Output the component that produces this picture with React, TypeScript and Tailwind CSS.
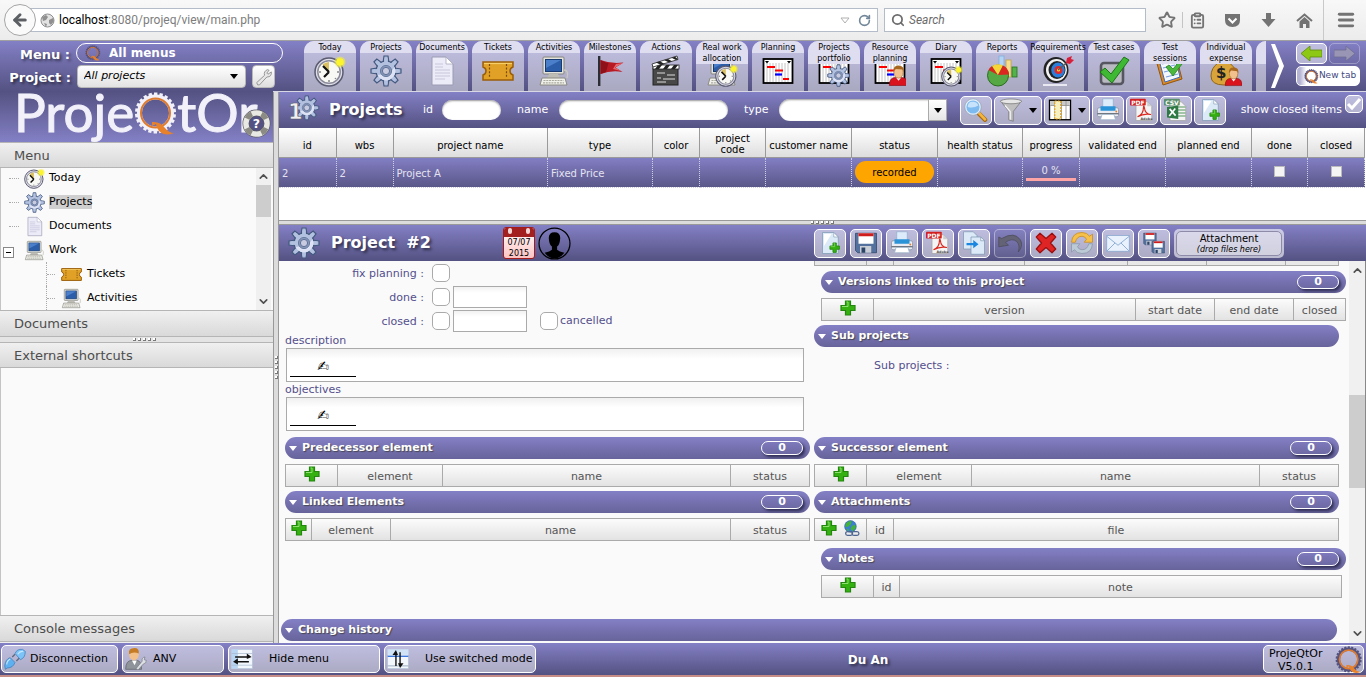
import type { ReactNode } from 'react'
import { clsx } from 'clsx'
import { ArrowLeft, ChevronDown, ChevronUp, ClipboardList, Menu, RotateCw, Search, Star } from 'lucide-react'

const BAR = 'bg-linear-to-b from-[#8480c6] to-[#545282]'
const PANEL_TITLE =
    'flex shrink-0 items-center border-y border-[#b5b5b5] bg-linear-to-b from-[#f0f0f0] to-[#d9d9d9] pt-px pl-3.5 text-[13px] text-[#4d4d4d]'
const TEXT_SHADOW = '[text-shadow:2px_2px_3px_rgba(0,0,0,0.55)]'

// *Icons
const Icon = ({ size = 32, className, children }: { size?: number; className?: string; children: ReactNode }) => (
    <svg width={size} height={size} viewBox="0 0 32 32" className={clsx('shrink-0', className)} aria-hidden="true">
        {children}
    </svg>
)

const At = ({ x, y, s, children }: { x: number; y: number; s: number; children: ReactNode }) => (
    <g transform={`translate(${x} ${y}) scale(${s})`}>{children}</g>
)

const Clock = () => (
    <g>
        <circle cx="15" cy="17" r="14" fill="#dedeea" stroke="#5a5a70" strokeWidth="1.5" />
        <circle cx="15" cy="17" r="11.2" fill="#f8f8f4" stroke="#8a8a9a" strokeWidth="1.5" />
        <path d="M15 17 8.5 9.5A10 10 0 0 1 15 7Z" fill="#d9bf5f" />
        <path d="M15 17 9 11M15 17l-5 5" stroke="#111" strokeWidth="2.2" fill="none" />
        <g fill="#888">
            <circle cx="15" cy="26" r="1" />
            <circle cx="24" cy="17" r="1" />
            <circle cx="6" cy="17" r="1" />
            <circle cx="21.5" cy="23.5" r="0.8" />
        </g>
        <circle cx="26" cy="7" r="5.5" fill="#f4ee3a" opacity="0.55" />
        <circle cx="26" cy="7" r="3.8" fill="#fdf52c" />
    </g>
)

const TEETH = [0, 45, 90, 135, 180, 225, 270, 315]

const Gear = () => (
    <g>
        {TEETH.map((a) => (
            <path key={a} d="M13 8 14 1h4l1 7Z" fill="#a9b7d9" stroke="#44597f" strokeWidth="1.2" transform={`rotate(${a} 16 16)`} />
        ))}
        <circle cx="16" cy="16" r="10" fill="#b4c1de" stroke="#44597f" strokeWidth="1.2" />
        {TEETH.map((a) => (
            <path key={a} d="M13.7 9.5 14.6 2.5h2.8l.9 7Z" fill="#b3c1e0" transform={`rotate(${a} 16 16)`} />
        ))}
        <path d="M7.5 20a9.3 9.3 0 0 0 17-8q-3 7-17 8Z" fill="#dde2f4" />
        <circle cx="16" cy="16" r="5.6" fill="#8797b9" stroke="#687ba1" strokeWidth="1" />
        <circle cx="16" cy="16" r="3.6" fill="#c9cbe0" stroke="#5d7097" strokeWidth="1" />
    </g>
)

const Doc = () => (
    <g>
        <path d="M6 2h14l7 7v21H6Z" fill="#ececf8" stroke="#9c9cb4" strokeWidth="1" />
        <path d="M20 2v7h7Z" fill="#fff" stroke="#a8a8bd" strokeWidth="0.8" />
        <path d="M9 9h8M9 12h8M9 15h15M9 18h15M9 21h15M9 24h10" stroke="#c6c6dc" strokeWidth="1.2" />
    </g>
)

const Ticket = () => (
    <g>
        <path
            d="M1 7h30v5q-3 1-3 4t3 4v5H1v-5q3-1 3-4t-3-4Z"
            fill="#e0a126"
            stroke="#9a5d08"
            strokeWidth="1.5"
        />
        <path d="M2 8.5h28" stroke="#f6cf6a" strokeWidth="1.2" />
        <path d="M7.5 9v14M24.5 9v14" stroke="#7d4a05" strokeWidth="1.2" strokeDasharray="2 1.6" />
    </g>
)

const Computer = () => (
    <g>
        <rect x="5" y="2" width="21" height="17" rx="1" fill="#e4e4dd" stroke="#84847e" />
        <rect x="7.5" y="4.5" width="16" height="12" fill="#2c5da8" stroke="#173a73" />
        <path d="M8 5h15l-15 8Z" fill="#4b7fca" />
        <path d="M11 19h9l2 4H9Z" fill="#bdbdb5" />
        <path d="M4 23h23l2 7H2Z" fill="#f0f0ea" stroke="#8a8a82" />
        <path d="M5.5 25.5h20M5 27.8h21" stroke="#a9a9a0" strokeWidth="1.2" strokeDasharray="2 0.8" />
        <path d="M26 15q5 0 3 8" fill="none" stroke="#c9c9c0" strokeWidth="1.3" />
    </g>
)

const Flag = () => (
    <g>
        <rect x="4" y="1" width="2.4" height="30" fill="#2c2c34" />
        <path d="M6.5 5q10 4 23 2.5l-8 5 7 4.5q-11-2-22 2Z" fill="#b81a24" />
        <path d="M6.5 5q5 3 8 3L12 17l-5.5 2Z" fill="#8e1019" />
        <path d="M22 9l7-1-8 4.5 6 3.5-8-2Z" fill="#e8666c" />
    </g>
)

const Clap = () => (
    <g>
        <rect x="3" y="13" width="25" height="17" fill="#484848" stroke="#222" />
        <rect x="3" y="10" width="26" height="4" fill="#fff" stroke="#222" strokeWidth="0.8" />
        <path d="M5 14l3-4h4l-3 4ZM13 14l3-4h4l-3 4ZM21 14l3-4h4l-3 4Z" fill="#222" />
        <path d="M2 9 27 1l1 3.5L3 12Z" fill="#fff" stroke="#222" strokeWidth="0.8" />
        <path d="M6 7.6 11 10 14.5 9 10 6.3ZM14 5l5 2.4L22 6.3 18 3.9ZM21.5 2.8 26 5l2-.7L25 1.7Z" fill="#222" />
        <path d="M7 18h8M17 20h8M7 23h4M13 24h12M7 27h9" stroke="#dcdcdc" strokeWidth="1.2" />
    </g>
)

const Plan = () => (
    <g>
        <rect x="1.5" y="4" width="29" height="24" fill="#fff" stroke="#000" strokeWidth="1.8" />
        <path d="M5 8v19M8 8v19M11 8v19M14 8v19M17 8v19M20 8v19M23 8v19M26 8v19" stroke="#c4c4c4" strokeWidth="1" />
        <path d="M3 6h4l-2 2.5ZM25 6h4l-2 2.5Z" fill="#000" />
        <path d="M5 12h8M13 15.5h8M21 24h6" stroke="#f00" strokeWidth="2.2" />
        <path d="M13 19.5h7" stroke="#00f" strokeWidth="2.2" />
    </g>
)

const Person = () => (
    <g>
        <path d="M2 31q0-12 9-12h10q9 0 9 12Z" fill="#d9141f" stroke="#8c0a12" />
        <path d="M12 19l4 5 4-5Z" fill="#fff" />
        <ellipse cx="16" cy="11" rx="7" ry="9" fill="#f1c08c" stroke="#a87038" />
        <path d="M8 10Q8 0 17 1q8 0 7 10l-2-4-10-1Z" fill="#a8671f" />
    </g>
)

const Reports = () => (
    <g>
        <rect x="13" y="1" width="5" height="16" fill="#b4d4f4" stroke="#7faedb" strokeWidth="0.8" />
        <rect x="20" y="5" width="5" height="17" fill="#f5de8c" stroke="#bfa548" strokeWidth="0.8" />
        <rect x="26" y="12" width="5" height="10" fill="#55b24a" stroke="#27701e" strokeWidth="0.8" />
        <circle cx="12" cy="20.5" r="10.5" fill="#55a843" stroke="#286d1c" />
        <path d="M12 20 2.5 15A11 11 0 0 1 6 11Z" fill="#d8281f" />
        <path d="M12 20 6 11A11 11 0 0 1 17 10.5Z" fill="#f6d53a" />
        <path d="M12 20 17 10.5A11 11 0 0 1 23 19.5Z" fill="#d8281f" />
    </g>
)

const Target = () => (
    <g>
        <path d="M1 30h24" stroke="#e8e8f2" strokeWidth="2" />
        <ellipse cx="14" cy="15" rx="12.5" ry="13" fill="#222" />
        <ellipse cx="14.5" cy="15" rx="10.5" ry="11" fill="#f4f4f4" />
        <ellipse cx="15" cy="15" rx="8.5" ry="9" fill="#222" />
        <ellipse cx="16" cy="15" rx="6.8" ry="7.4" fill="#2b7fdb" />
        <circle cx="16.5" cy="15" r="4" fill="#e3282c" />
        <circle cx="16.5" cy="15" r="1.6" fill="#f8d838" />
        <path d="M16 15 27 6" stroke="#5a5a5a" strokeWidth="1.4" />
        <path d="M24 8l1-5 5-2-1 3 3 1-4 4Z" fill="#d81e38" />
    </g>
)

const TestCase = () => (
    <g>
        <rect x="3" y="8" width="22" height="21" rx="3" fill="#b9b9c2" stroke="#565660" strokeWidth="2.6" />
        <path d="M2 17l5-4 6 6L26 2l5 3-17 23Z" fill="#3fb834" stroke="#1b7514" strokeWidth="1" />
    </g>
)

const Session = () => (
    <g>
        <path d="M2 5 22 1l6 23-19 6Z" fill="#d98a2a" stroke="#93560f" />
        <path d="M5 5 21 2l5 20-15 5Z" fill="#f6f8ff" stroke="#3c6bc0" />
        <path d="M8 9l12-3M9 13l12-3M10 17l12-3M12 22l12-3" stroke="#7ba0e0" strokeWidth="1.2" />
        <path d="M12 12l3-2 4 4 9-11 3 2-12 16Z" fill="#49b83c" stroke="#1b7514" strokeWidth="0.7" />
    </g>
)

const Money = () => (
    <g>
        <path d="M9 2q4 3 8-1l1 6q9 6 9 14 0 9-13 9T1 21Q1 13 8 8Z" fill="#d9a43a" stroke="#8f651a" />
        <path d="M8 8h10" stroke="#7a5110" strokeWidth="1.6" />
        <text x="6" y="23" fontSize="15" fontWeight="bold" fill="#222">
            $
        </text>
    </g>
)

const Printer = () => (
    <g>
        <path d="M9 1h14v13H9Z" fill="#dcecfb" stroke="#86a8c8" strokeWidth="0.8" />
        <rect x="2" y="13" width="28" height="12" rx="2" fill="#e9ecf2" stroke="#8792a4" />
        <rect x="6" y="11" width="20" height="6" fill="#2b93d8" />
        <path d="M2 21h28" stroke="#4d5560" strokeWidth="1.4" />
        <path d="M8 22h16l2 7H6Z" fill="#fff" stroke="#9ab1c8" />
        <circle cx="27" cy="18" r="1.2" fill="#f07a1c" />
    </g>
)

const Pdf = () => (
    <g>
        <path d="M8 5h15l6 6v19H8Z" fill="#f4f4f4" stroke="#a4a4a4" />
        <path d="M23 5v6h6Z" fill="#ccc" />
        <rect x="0" y="1" width="21" height="9" rx="1" fill="#d31f1f" />
        <text x="1.5" y="8.8" fontSize="8" fontWeight="bold" fill="#fff">
            PDF
        </text>
        <path d="M10 25q8-3 8-13 0-3 1 0 1 10 9 10-9-2-18 3Z" fill="none" stroke="#d8281f" strokeWidth="1.5" />
        <text x="14" y="29.3" fontSize="4.5" fontWeight="bold" fill="#444">
            Adobe
        </text>
    </g>
)

const Csv = () => (
    <g>
        <path d="M8 5h15l6 6v19H8Z" fill="#f4f4f4" stroke="#a4a4a4" />
        <rect x="0" y="1" width="21" height="9" rx="1" fill="#5b8f6b" />
        <text x="1.5" y="8.8" fontSize="8" fontWeight="bold" fill="#fff">
            CSV
        </text>
        <path d="M18 12h11M18 16h11M18 20h11M18 24h11" stroke="#8bb58f" strokeWidth="2" />
        <path d="M4 12 19 10v18L4 26Z" fill="#2e7a44" />
        <path d="M7.5 14.5l8 9M15 14l-8 10" stroke="#fff" strokeWidth="2.2" />
    </g>
)

const Plus = () => (
    <g>
        <path d="M11 2h10v9h9v10h-9v9H11v-9H2V11h9Z" fill="#35b011" stroke="#23860e" strokeWidth="2.4" />
        <path d="M13 4h3v9H4" fill="none" stroke="#8ee070" strokeWidth="2" />
    </g>
)

const AddDoc = () => (
    <g>
        <path d="M6 2h15l6 6v22H6Z" fill="#dceaf8" stroke="#7f99b4" />
        <path d="M21 2v6h6Z" fill="#fff" stroke="#7f99b4" strokeWidth="0.8" />
        <path d="M8 4h10l-10 16Z" fill="#fff" />
        <At x={15} y={15} s={0.45}>
            <Plus />
        </At>
    </g>
)

const Floppy = () => (
    <g>
        <path d="M2 3h28v26H5l-3-3Z" fill="#53719c" stroke="#2c4468" />
        <rect x="6" y="3" width="20" height="14" fill="#fff" />
        <rect x="6" y="3" width="20" height="4" fill="#cf1c1c" />
        <rect x="8" y="20" width="15" height="9" fill="#c9ced6" />
        <rect x="10" y="22" width="5" height="7" fill="#2c4468" />
    </g>
)

const CopyDoc = () => (
    <g>
        <path d="M2 1h13l5 5v18H2Z" fill="#dceaf8" stroke="#7f99b4" />
        <path d="M12 8h13l5 5v18H12Z" fill="#dceaf8" stroke="#7f99b4" />
        <path d="M25 8v5h5Z" fill="#fff" stroke="#7f99b4" />
        <path d="M6 16h9v-4l7 5.5-7 5.5v-4H6Z" fill="#1a86e0" />
    </g>
)

const Undo = () => (
    <path d="M1 8v13l13-2-4-4q9-6 15-1 5 5 2 14 7-8 3-16-8-12-25-2Z" fill="#646376" stroke="#4c4b5c" />
)

const Cross = () => (
    <path
        d="M3 8 8 3l8 7 8-7 5 5-7 8 7 8-5 5-8-7-8 7-5-5 7-8Z"
        fill="#de2424"
        stroke="#9c0d0d"
        strokeWidth="1.6"
        strokeLinejoin="round"
    />
)

// two half-circle arrows, the upper one gold and the lower one grey
const Refresh = () => (
    <g strokeLinejoin="round">
        <path d="M2 15Q3 2 16 2q7 0 10 5l4-3v11H19l3-4q-2-4-6-4-7 0-9 8Z" fill="#f5c14a" stroke="#c88a17" />
        <path d="M30 17Q29 30 16 30q-7 0-10-5l-4 3V17h11l-3 4q2 4 6 4 7 0 9-8Z" fill="#bccad6" stroke="#8796a4" />
    </g>
)

const Mail = () => (
    <g>
        <rect x="1" y="6" width="30" height="21" fill="#e8f1fc" stroke="#86a5ce" />
        <path d="M1 7 16 19 31 7M1 27l11-11M31 27 20 16" fill="none" stroke="#8eaed6" strokeWidth="1.3" />
    </g>
)

const Magnifier = () => (
    <g>
        <path d="M19 20l9 9" stroke="#a86a10" strokeWidth="6" strokeLinecap="round" />
        <path d="M20 20l8 8.5" stroke="#f4b53c" strokeWidth="3.6" strokeLinecap="round" />
        <circle cx="12" cy="12" r="10" fill="#7cbaf0" stroke="#e4eef8" strokeWidth="2.4" />
        <circle cx="12" cy="12" r="11" fill="none" stroke="#7b8ba4" strokeWidth="0.8" />
        <path d="M5 12Q5 4 13 5q5 1 6 5-6 4-14 2Z" fill="#c6e3fb" />
    </g>
)

const Funnel = () => (
    <g>
        <path d="M2 4 13 18v11l6 2V18L30 4Z" fill="#bfbfbf" stroke="#777" />
        <ellipse cx="16" cy="4.5" rx="14" ry="3.2" fill="#e6e6e6" stroke="#777" />
        <path d="M8 10l7 8v11" fill="none" stroke="#f4f4f4" strokeWidth="1.6" />
    </g>
)

const Columns = () => (
    <g>
        <rect x="2" y="3" width="28" height="26" fill="#fff" stroke="#000" strokeWidth="1.8" />
        <rect x="3" y="4" width="26" height="6" fill="#c9c9c9" />
        <path d="M9 4v24M18 4v24M24 4v24M3 10h26" stroke="#888" />
        <rect x="9" y="4" width="8" height="24" fill="#f6efc0" stroke="#e2a21a" strokeWidth="1.6" strokeDasharray="2.5 1.5" />
    </g>
)

const Wrench = () => (
    <path
        d="M3 26 17 13q-2-7 5-10l3 1-4 5 2 2 6-4q1 9-8 9L8 30q-4 2-5-4Z"
        fill="#e6e6e6"
        stroke="#8d8d8d"
        strokeWidth="1.6"
    />
)

const GlobeLink = () => (
    <g>
        <circle cx="14" cy="12" r="11" fill="#3b7fd0" stroke="#27558f" />
        <path d="M6 6q6-5 10-4l-1 6-6 5-5-1ZM17 11l6-2 1 6-6 6-4-5ZM6 16l5 2-1 4Z" fill="#43b238" />
        <rect x="5" y="22" width="13" height="7" rx="3.5" fill="none" stroke="#4d6692" strokeWidth="2.4" />
        <rect x="17" y="22" width="13" height="7" rx="3.5" fill="none" stroke="#4d6692" strokeWidth="2.4" />
    </g>
)

const Plug = () => (
    <g>
        <path d="M1 26q1-10 8-12l7 7q-3 8-11 8l-3 2Z" fill="#5fb0ee" stroke="#3a78b4" />
        <path d="M16 8q3-7 11-6l4 3q0 9-7 12Z" fill="#7cc4f7" stroke="#3a78b4" />
        <path d="M12 13l4-4M18 19l4-4" stroke="#5a6a80" strokeWidth="2" />
        <path d="M9 16q-5 3-5 8M20 9q3-5 8-4" stroke="#c8e8fd" strokeWidth="1.6" fill="none" />
    </g>
)

const UserTool = () => (
    <g>
        <path d="M1 31q0-13 9-13h7q7 0 7 13Z" fill="#8f939a" stroke="#5b5e64" />
        <path d="M10 18l4 7 3-7Z" fill="#fff" />
        <ellipse cx="13" cy="9" rx="7" ry="9" fill="#f4c08a" />
        <path d="M6 9Q4 0 14 0q7 0 6 8-8-3-14 1Z" fill="#c67c25" />
        <path d="M16 30 25 19q-1-5 4-6l-1 4 3 1q0 5-4 5l-8 9Z" fill="#dcdfe4" stroke="#767b84" />
    </g>
)

const SwitchMode = () => (
    <g>
        <rect x="1" y="2" width="30" height="28" fill="#f2f7fd" stroke="#b4c4d8" />
        <rect x="1" y="2" width="30" height="8" fill="#cfe2f6" />
        <path d="M1 12h30" stroke="#2166d8" strokeWidth="1.8" />
        <path d="M1 26h30" stroke="#7a8fa8" />
        <path d="M13 6v20M19 6v20" stroke="#111" strokeWidth="2" />
        <path d="M13 3l-5 7h8ZM19 29l5-7h-8Z" fill="#111" />
    </g>
)

const HideMode = () => (
    <g>
        <rect x="1" y="2" width="30" height="28" fill="#f2f7fd" stroke="#b4c4d8" />
        <rect x="1" y="2" width="9" height="28" fill="#b9d5f4" />
        <path d="M1 8h30M1 25h30" stroke="#a4b6cc" />
        <path d="M6 13h20M6 20h20" stroke="#111" strokeWidth="2" />
        <path d="M30 13l-7-5v8ZM3 20l7-5v9Z" fill="#111" />
    </g>
)

const Q_TEETH = Array.from({ length: 22 }, (_, i) => (i * 360) / 22)

const QLogo = ({ size, light }: { size: number; light?: boolean }) => (
    <svg width={size} height={size} viewBox="0 0 44 44" className="shrink-0" aria-hidden="true">
        {Q_TEETH.map((a) => (
            <rect key={a} x="20" y="0.5" width="3.4" height="5" fill={light ? '#f2f1fa' : '#55537f'} transform={`rotate(${a} 21.5 21)`} />
        ))}
        <circle cx="21.5" cy="21" r="16" fill="none" stroke={light ? '#f2f1fa' : '#55537f'} strokeWidth="5" />
        <circle cx="21.5" cy="21" r="14.5" fill="none" stroke="#e07b2e" strokeWidth={light ? 2 : 2.6} />
        <path d="M18 30q8-1 13 6 4 5 9 5-9 4-15-2-3-4-3-7l-4 2Z" fill="#e8812c" />
    </svg>
)

const Caret = ({ className }: { className?: string }) => (
    <svg width="8" height="5" viewBox="0 0 8 5" className={className} aria-hidden="true">
        <path d="M0 0h8L4 5Z" fill="currentColor" />
    </svg>
)

// *Data
const shortcuts: { label: string; icon: ReactNode }[] = [
    { label: 'Today', icon: <Clock /> },
    { label: 'Projects', icon: <Gear /> },
    { label: 'Documents', icon: <Doc /> },
    { label: 'Tickets', icon: <Ticket /> },
    { label: 'Activities', icon: <Computer /> },
    { label: 'Milestones', icon: <Flag /> },
    { label: 'Actions', icon: <Clap /> },
    { label: 'Real work allocation', icon: <><Computer /><At x={9} y={9} s={0.72}><Clock /></At></> },
    { label: 'Planning', icon: <Plan /> },
    { label: 'Projects portfolio', icon: <><Plan /><At x={9} y={9} s={0.72}><Gear /></At></> },
    { label: 'Resource planning', icon: <><Plan /><At x={14} y={10} s={0.66}><Person /></At></> },
    { label: 'Diary', icon: <><Plan /><At x={11} y={10} s={0.68}><Clock /></At></> },
    { label: 'Reports', icon: <Reports /> },
    { label: 'Requirements', icon: <Target /> },
    { label: 'Test cases', icon: <TestCase /> },
    { label: 'Test sessions', icon: <Session /> },
    { label: 'Individual expense', icon: <><Money /><At x={14} y={12} s={0.6}><Person /></At></> },
]

const tree = [
    { label: 'Today', icon: <Clock />, depth: 0 },
    { label: 'Projects', icon: <Gear />, depth: 0, selected: true },
    { label: 'Documents', icon: <Doc />, depth: 0 },
    { label: 'Work', icon: <Computer />, depth: 0, open: true },
    { label: 'Tickets', icon: <Ticket />, depth: 1 },
    { label: 'Activities', icon: <Computer />, depth: 1 },
]

const gridColumns = [
    { label: 'id', width: 'w-[57px]', value: '2' },
    { label: 'wbs', width: 'w-[57px]', value: '2' },
    { label: 'project name', width: 'w-auto', value: 'Project A' },
    { label: 'type', width: 'w-[105px]', value: 'Fixed Price' },
    { label: 'color', width: 'w-[47px]' },
    { label: 'project code', width: 'w-[66px]', wrap: true },
    { label: 'customer name', width: 'w-[86px]' },
    { label: 'status', width: 'w-[86px]' },
    { label: 'health status', width: 'w-[85px]' },
    { label: 'progress', width: 'w-[57px]' },
    { label: 'validated end', width: 'w-[86px]' },
    { label: 'planned end', width: 'w-[86px]' },
    { label: 'done', width: 'w-[56px]' },
    { label: 'closed', width: 'w-[57px]' },
]

// *Parts
const ToolButton = ({ label, width = 'w-8', disabled, caret, children }: {
    label: string
    width?: string
    disabled?: boolean
    caret?: boolean
    children: ReactNode
}) => (
    <button
        type="button"
        aria-label={label}
        disabled={disabled}
        className={clsx(
            'flex h-[29px] shrink-0 items-center justify-center gap-1.5 rounded-[5px] border',
            disabled ? 'border-white/40 bg-white/5' : 'border-white bg-white/50',
            width,
        )}
    >
        <Icon size={24}>{children}</Icon>
        {caret && <Caret className="text-black" />}
    </button>
)

const Section = ({ title, count }: { title: string; count?: number }) => (
    <h2 className="flex h-[22px] items-center rounded-full bg-linear-to-b from-[#8480c6] to-[#67639a] pr-[7px] pl-1 text-[11px] font-bold text-white">
        <Caret className="mr-[5px] text-white" />
        <span className="[text-shadow:1px_1px_1px_rgba(60,60,60,0.8)]">{title}</span>
        {count !== undefined && (
            <span className="ml-auto flex h-[14px] w-[42px] items-center justify-center rounded-full border border-white pt-px shadow-[2px_2px_3px_rgba(20,20,50,0.7)]">
                {count}
            </span>
        )}
    </h2>
)

const LinkTable = ({ columns, className, link }: {
    columns: { label: string; width?: string }[]
    className?: string
    link?: boolean
}) => (
    <table className={clsx('h-[23px] w-full table-fixed border-collapse bg-linear-to-b from-[#fcfcfc] to-[#e2e2e2] text-[11px] text-[#555]', className)}>
        <thead>
            <tr>
                {columns.map((c, i) => (
                    <th key={i} className={clsx('h-[22px] border border-[#aaa] p-0 pt-0.5 leading-4 font-normal', c.width)}>
                        {c.label || (
                            <span className="flex items-center justify-center gap-1.5">
                                <button type="button" aria-label="Add" className="-mt-1.5">
                                    <Icon size={16}><Plus /></Icon>
                                </button>
                                {link && (
                                    <button type="button" aria-label="Add link" className="-mt-1">
                                        <Icon size={17}><GlobeLink /></Icon>
                                    </button>
                                )}
                            </span>
                        )}
                    </th>
                ))}
            </tr>
        </thead>
    </table>
)

const Tick = ({ id }: { id: string }) => (
    <input id={id} type="checkbox" className="size-[18px] shrink-0 appearance-none rounded-[5px] border border-[#aaa] bg-white" />
)

const FieldRow = ({ id, label, date, children }: { id: string; label: string; date?: boolean; children?: ReactNode }) => (
    <div className="flex h-6 items-center text-[11px] text-[#544f8c]">
        <label htmlFor={id} className="w-[140px] pt-0.5 pr-px text-right">{label} :</label>
        <span className="w-[7px]" />
        <Tick id={id} />
        {date && (
            <input
                aria-label={`${label} date`}
                className="ml-[3px] h-[22px] w-[74px] border border-[#aaa] bg-linear-to-b from-[#f2f2f2] to-white to-30%"
            />
        )}
        {children}
    </div>
)

const RichText = ({ label }: { label: string }) => (
    <div>
        <span className="flex h-[15px] items-center pt-0.5 text-[11px] text-[#544f8c]">{label}</span>
        <div className="mr-1.5 ml-px h-[34px] border border-[#aaa] bg-linear-to-b from-[#f0f0f0] to-white to-30% px-[3px]">
            <button
                type="button"
                aria-label={`Edit ${label}`}
                className="flex h-7 w-[66px] items-end justify-center border-b border-black pb-0.5 text-[14px] leading-4 text-black"
            >
                ✍
            </button>
        </div>
    </div>
)

const Grip = ({ vertical }: { vertical?: boolean }) => (
    <span className={clsx('flex gap-[2px]', vertical && 'flex-col')}>
        {[0, 1, 2, 3, 4].map((i) => (
            <span key={i} className="size-[3px] border-r border-b border-[#777] bg-white" />
        ))}
    </span>
)

const BrowserBar = () => (
    <header className="flex h-[41px] shrink-0 items-center border-b border-[#a0a0a0] bg-linear-to-b from-[#f8f8f8] to-[#ececec] text-[12px] [font-family:Roboto,sans-serif]">
        <button
            type="button"
            aria-label="Back"
            className="relative z-10 ml-1 flex size-8 shrink-0 items-center justify-center rounded-full border border-[#a5a5a5] bg-[#fafafa] text-[#5c6064]"
        >
            <ArrowLeft size={18} strokeWidth={4} />
        </button>
        <div className="-ml-2 flex h-6 flex-1 items-center border border-[#b3bcc8] bg-white pl-[11px]">
            <svg width="15" height="15" viewBox="0 0 15 15" className="mr-1" aria-hidden="true">
                <circle cx="7.5" cy="7.5" r="6.5" fill="#e2e2e2" stroke="#8f8f8f" />
                <path d="M2 4l4-2 2 2-2 3-3 1ZM9 7l4-2 1 3-3 4-2-2ZM4 10l3 1-1 3Z" fill="#8f8f8f" />
            </svg>
            <label htmlFor="url" className="text-black">localhost</label>
            <input id="url" defaultValue=":8080/projeq/view/main.php" className="min-w-0 flex-1 text-[#7d7d7d] outline-none" />
            <svg width="10" height="7" viewBox="0 0 10 7" className="mr-2" aria-hidden="true">
                <path d="M1 1h8L5 6Z" fill="none" stroke="#b0b0b0" />
            </svg>
            <button type="button" aria-label="Reload" className="mr-1.5 text-[#72879a]">
                <RotateCw size={13} strokeWidth={3} />
            </button>
        </div>
        <div className="ml-1.5 flex h-6 w-[262px] items-center border border-[#b3bcc8] bg-white px-1.5">
            <Search size={14} className="mr-1 text-[#6c6c6c]" strokeWidth={3} />
            <input aria-label="Search" placeholder="Search" className="min-w-0 flex-1 italic outline-none placeholder:text-[#6b6b6b]" />
        </div>
        <nav className="flex h-full w-[220px] items-center text-[#737373]">
            <button type="button" aria-label="Bookmark" className="ml-3">
                <Star size={18} strokeWidth={2.5} />
            </button>
            <span className="mx-1.5 h-4 w-px bg-[#c4c4c4]" />
            <button type="button" aria-label="Bookmarks list">
                <ClipboardList size={17} strokeWidth={2.6} />
            </button>
            <button type="button" aria-label="Pocket" className="ml-[18px]">
                <svg width="17" height="15" viewBox="0 0 17 15" aria-hidden="true">
                    <path d="M1 1h15v6q0 7-7.5 7T1 7Z" fill="currentColor" />
                    <path d="M4.5 5.5l4 4 4-4" fill="none" stroke="#fff" strokeWidth="2" />
                </svg>
            </button>
            <button type="button" aria-label="Downloads" className="ml-5">
                <svg width="15" height="15" viewBox="0 0 15 15" aria-hidden="true">
                    <path d="M5 0h5v6h4.5L7.5 14 .5 6H5Z" fill="currentColor" />
                </svg>
            </button>
            <button type="button" aria-label="Home" className="ml-5">
                <svg width="17" height="15" viewBox="0 0 17 15" aria-hidden="true">
                    <path d="M1 8 8.5 1.5 16 8" fill="none" stroke="currentColor" strokeWidth="2" />
                    <path d="M3.5 8.5l5-4.5 5 4.5V15H10v-4H7v4H3.5Z" fill="currentColor" />
                </svg>
            </button>
            <span className="ml-2.5 h-full w-px bg-[#c9c9c9]" />
            <button type="button" aria-label="Menu" className="ml-3">
                <Menu size={20} strokeWidth={3.5} />
            </button>
        </nav>
    </header>
)

const Brand = () => (
    <div className="relative z-10 flex h-[101px] shrink-0 flex-col gap-0.5 bg-linear-to-b from-[#8480c6] via-[#545282] to-[#8480c6] pt-0.5 text-[13px] font-bold text-white">
        <div className="flex h-5 items-center">
            <span className={clsx('w-[76px] shrink-0 pt-1 pr-1.5 text-right', TEXT_SHADOW)}>Menu :</span>
            <button
                type="button"
                className="flex h-5 w-[207px] shrink-0 items-center gap-2 rounded-full border border-white pl-2 text-[12px]"
            >
                <QLogo size={16} />
                All menus
            </button>
        </div>
        <div className="flex h-[23px] items-center">
            <label htmlFor="project" className={clsx('w-[77px] shrink-0 pt-0.5 pr-1.5 text-right', TEXT_SHADOW)}>
                Project :
            </label>
            <span className="relative mr-1.5 text-black">
                <select
                    id="project"
                    className="block h-[23px] w-[169px] appearance-none rounded-sm border border-[#b8b8b8] bg-linear-to-b from-white to-[#e2e2e2] pl-1.5 text-[11px] font-normal italic"
                >
                    <option>All projects</option>
                </select>
                <Caret className="pointer-events-none absolute top-[9px] right-2" />
            </span>
            <button
                type="button"
                aria-label="Project settings"
                className="flex size-[23px] shrink-0 items-center justify-center rounded-sm border border-[#b8b8b8] bg-linear-to-b from-white to-[#dedede]"
            >
                <Icon size={18}><Wrench /></Icon>
            </button>
        </div>
        <div className="mt-0.5 flex pl-3.5 text-[53px] leading-[40px] font-normal text-[#f2f1fa] [-webkit-text-stroke:1px_#f2f1fa] [font-family:Lato,sans-serif]">
            Proje
            <span className="w-[43px] shrink-0">
                <QLogo size={44} light />
            </span>
            tOr
        </div>
        <button type="button" aria-label="Help" className="absolute right-0.5 bottom-1">
            <svg width="29" height="29" viewBox="0 0 30 30" aria-hidden="true">
                <circle cx="15" cy="15" r="11" fill="#545282" stroke="#5d5d66" strokeWidth="7" />
                <circle cx="15" cy="15" r="11" fill="none" stroke="#e9e9e4" strokeWidth="5.5" />
                <circle cx="15" cy="15" r="11" fill="none" stroke="#8b8b84" strokeWidth="5.5" strokeDasharray="7 10.28" strokeDashoffset="-5" />
                <text x="11" y="20" fontSize="13" fontWeight="bold" fill="#fff">?</text>
            </svg>
        </button>
    </div>
)

const SideMenu = () => (
    <aside className="flex w-[273px] shrink-0 flex-col">
        <Brand />
        <h2 className={clsx(PANEL_TITLE, 'h-[26px]')}>Menu</h2>
        <div className="flex h-[142px] shrink-0 overflow-hidden border-l border-[#c4c4c4] bg-[#fafafa]">
            <ul className="-mt-0.5 flex-1 text-[11px] text-black">
                {tree.map((n) => (
                    <li key={n.label} className={clsx('flex h-6 items-center', n.depth ? 'pl-[45px]' : 'pl-0.5')}>
                        {n.open ? (
                            <button
                                type="button"
                                aria-label="Collapse"
                                className="mt-1 mr-2.5 flex size-[11px] items-center justify-center border border-[#888] bg-white"
                            >
                                <span className="h-px w-[5px] bg-black" />
                            </button>
                        ) : (
                            <span
                                className={clsx(
                                    'flex items-center',
                                    n.depth ? 'mr-1.5 h-6 w-[9px] border-l border-dotted border-[#aaa]' : 'mr-[5px] ml-1.5 w-2.5',
                                )}
                            >
                                <span className="w-full border-t border-dotted border-[#aaa]" />
                            </span>
                        )}
                        <Icon size={21}>{n.icon}</Icon>
                        <a href="#" className={clsx('leading-[14px]', n.depth ? 'ml-[5px]' : 'ml-1', n.selected && 'bg-[#cfcfcf]')}>{n.label}</a>
                    </li>
                ))}
            </ul>
            <div className="mr-0.5 flex w-[15px] flex-col items-center gap-0.5 bg-[#f0f0f0] py-0.5 text-[#505050]">
                <ChevronUp size={13} strokeWidth={3} />
                <span className="mb-auto h-8 w-full bg-[#cdcdcd]" />
                <ChevronDown size={13} strokeWidth={3} />
            </div>
        </div>
        <h2 className={clsx(PANEL_TITLE, 'h-[27px]')}>Documents</h2>
        <div className="flex h-[5px] shrink-0 items-center justify-center bg-[#e4e4e4] pl-4">
            <Grip />
        </div>
        <h2 className={clsx(PANEL_TITLE, 'h-[26px]')}>External shortcuts</h2>
        <div className="flex-1 border-l border-[#c4c4c4] bg-[#fafafa]" />
        <h2 className={clsx(PANEL_TITLE, 'h-[27px]')}>Console messages</h2>
        <div className="h-px bg-[#eee]" />
    </aside>
)

const Toolbar = () => (
    <nav className={clsx('flex h-[51px] shrink-0 border-b border-[#d8d8e4] pl-[31px]', BAR)}>
        <div className="flex min-w-0 flex-1 gap-1 overflow-hidden">
            {shortcuts.map((s) => (
                <button
                    key={s.label}
                    type="button"
                    className="relative flex w-[52px] shrink-0 flex-col items-center rounded-t-[10px] bg-white/50"
                >
                    <span className="absolute top-3.5">
                        <Icon>{s.icon}</Icon>
                    </span>
                    <span className="relative flex w-full justify-center rounded-t-[10px] bg-[#dfdef1] pt-px text-[8px] leading-[11px] text-black">
                        {s.label}
                    </span>
                </button>
            ))}
            <span className="w-[52px] shrink-0 rounded-tl-[10px] bg-white/50">
                <span className="block h-[23px] rounded-tl-[10px] bg-[#dfdef1]" />
            </span>
        </div>
        <button type="button" aria-label="Scroll right" className="mx-1 shrink-0">
            <svg width="14" height="44" viewBox="0 0 14 44" aria-hidden="true">
                <path d="M1 0h4l9 22-9 22H1l8-22Z" fill="#fff" />
            </svg>
        </button>
        <div className="flex w-[78px] shrink-0 flex-col gap-0.5 pt-0.5 pl-2">
            <div className="flex gap-0.5">
                <button type="button" aria-label="Previous" className="flex h-[21px] w-[31px] items-center justify-center rounded-[5px] border border-white bg-white/50">
                    <svg width="21" height="15" viewBox="0 0 21 15" aria-hidden="true">
                        <path d="M0 7.5 9 0v4h12v7H9v4Z" fill="#8cc814" stroke="#5d8a0a" strokeWidth="0.8" />
                    </svg>
                </button>
                <button type="button" aria-label="Next" disabled className="flex h-[21px] w-[31px] items-center justify-center rounded-[5px] border border-white/30">
                    <svg width="21" height="15" viewBox="0 0 21 15" aria-hidden="true">
                        <path d="M21 7.5 12 0v4H0v7h12v4Z" fill="#9896b4" stroke="#6f6d92" strokeWidth="0.8" />
                    </svg>
                </button>
            </div>
            <button type="button" className="flex h-5 w-16 items-center justify-center rounded-[5px] border border-white bg-linear-to-r from-[#b5b3d4] from-5% to-white to-15% pl-1 text-[9px] whitespace-nowrap text-[#444a80]">
                <QLogo size={15} />
                New tab
            </button>
        </div>
    </nav>
)

const ProjectList = () => (
    <section className="flex h-[128px] shrink-0 flex-col bg-white">
        <div className={clsx('flex h-9 shrink-0 items-center text-[11px] text-white', BAR)}>
            <Icon size={32} className="ml-[9px]">
                <At x={6} y={1} s={0.8}><Gear /></At>
                <text x="0" y="25" fontSize="21" fontWeight="bold" fill="#f0f0f0" stroke="#55606e" strokeWidth="0.6">
                    1
                </text>
            </Icon>
            <h1 className={clsx('ml-[9px] w-[94px] text-[16px] font-bold', TEXT_SHADOW)}>Projects</h1>
            <label htmlFor="f-id" className="w-[19px]">id</label>
            <input id="f-id" className="h-5 w-[59px] shrink-0 rounded-full bg-white px-2 text-black shadow-[inset_0_1px_2px_#999]" />
            <label htmlFor="f-name" className="mx-4 w-[26px]">name</label>
            <input id="f-name" className="h-5 w-[169px] shrink-0 rounded-full bg-white px-2 text-black shadow-[inset_0_1px_2px_#999]" />
            <label htmlFor="f-type" className="ml-4 w-[35px]">type</label>
            <span className="relative shrink-0 text-black">
                <select id="f-type" className="block h-[22px] w-[168px] appearance-none rounded-l-full bg-white shadow-[inset_0_1px_2px_#999]" />
                <span className="pointer-events-none absolute inset-y-0 right-0 flex w-[19px] items-center justify-center border border-[#aaa] bg-linear-to-b from-white to-[#e6e6e6]">
                    <Caret />
                </span>
            </span>
            <div className="ml-[13px] flex gap-0.5">
                <ToolButton label="Search"><Magnifier /></ToolButton>
                <ToolButton label="Filter" width="w-12" caret><Funnel /></ToolButton>
                <ToolButton label="Columns" width="w-[46px]" caret><Columns /></ToolButton>
                <ToolButton label="Print"><Printer /></ToolButton>
                <ToolButton label="Export PDF"><Pdf /></ToolButton>
                <ToolButton label="Export CSV"><Csv /></ToolButton>
                <ToolButton label="New project"><AddDoc /></ToolButton>
            </div>
            <label htmlFor="closed-items" className="ml-auto pt-px whitespace-nowrap">show closed items</label>
            <span className="relative mx-[3px] mt-[3px] size-[18px] shrink-0 self-start">
                <input id="closed-items" type="checkbox" defaultChecked className="block size-[18px] appearance-none rounded-[5px] border border-white bg-white/50" />
                <svg width="18" height="18" viewBox="0 0 18 18" className="pointer-events-none absolute inset-0" aria-hidden="true">
                    <path d="M3 9l4 4 8-9" fill="none" stroke="#fff" strokeWidth="3" />
                </svg>
            </span>
        </div>
        <div className="pr-px">
            <table className="w-full table-fixed border-collapse text-[10px] text-black">
                <thead>
                    <tr className="h-[29px] bg-linear-to-b from-white to-[#dedede]">
                        {gridColumns.map((c) => (
                            <th
                                key={c.label}
                                className={clsx(
                                    'border-r border-b border-[#9a9a9a] pb-0 font-normal',
                                    c.wrap ? 'px-3 pt-1 leading-[11px]' : 'px-0 pt-2 leading-3 whitespace-nowrap',
                                    c.width,
                                )}
                            >
                                {c.label}
                            </th>
                        ))}
                    </tr>
                </thead>
                <tbody>
                    <tr className="h-[30px] bg-linear-to-b from-[#8480c6] to-[#5a5789] text-[#e4e3f0]">
                        {gridColumns.map((c) => (
                            <td key={c.label} className="border-r border-b border-dotted border-[#cfcde0] px-[3px] py-0">
                                {c.value && <span className="block pt-0.5">{c.value}</span>}
                                {c.label === 'status' && (
                                    <span className="flex h-[22px] w-full items-center justify-center rounded-full bg-[#ffa500] pt-px text-black">
                                        recorded
                                    </span>
                                )}
                                {c.label === 'progress' && (
                                    <span className="block w-full border-b-[3px] border-[#ffa5a5] pt-px text-center leading-[14px]">0 %</span>
                                )}
                                {(c.label === 'done' || c.label === 'closed') && (
                                    <input type="checkbox" aria-label={c.label} className="mx-auto mb-px block size-[11px] appearance-none border border-[#bbb] bg-[#f4f4f4]" />
                                )}
                            </td>
                        ))}
                    </tr>
                </tbody>
            </table>
        </div>
    </section>
)

const DetailBar = () => (
    <div className={clsx('flex h-9 shrink-0 items-center', BAR)}>
        <Icon size={32} className="ml-[9px]"><Gear /></Icon>
        <h1 className={clsx('ml-[11px] w-[172px] text-[16px] font-bold whitespace-pre text-white', TEXT_SHADOW)}>{'Project  #2'}</h1>
        <div className="flex h-8 w-8 shrink-0 flex-col overflow-hidden rounded-[3px] border border-[#a51b1b] bg-linear-to-b from-white to-[#fbc3c3] text-center text-[8px] leading-[11px] text-black">
            <span className="flex h-[9px] shrink-0 justify-between bg-[#a32020] px-1">
                <span className="h-1.5 w-1 rounded-full bg-[#f3d6d6]" />
                <span className="h-1.5 w-1 rounded-full bg-[#f3d6d6]" />
            </span>
            07/07
            <br />
            2015
        </div>
        <Icon size={33} className="ml-[3px]">
            <circle cx="16" cy="16" r="15" fill="none" stroke="#000" strokeWidth="1.2" />
            <path d="M16 5q6 0 5.5 6.5-.5 6-3 7.5v3q2 2 7 3-4 5.5-9.5 5.5T6.500 25q5-1 7-3v-3q-2.5-1.5-3-7.5Q10 5 16 5Z" fill="#000" />
        </Icon>
        <div className="ml-auto flex gap-1 pr-[82px]">
            <ToolButton label="New"><AddDoc /></ToolButton>
            <ToolButton label="Save"><Floppy /></ToolButton>
            <ToolButton label="Print"><Printer /></ToolButton>
            <ToolButton label="PDF"><Pdf /></ToolButton>
            <ToolButton label="Copy"><CopyDoc /></ToolButton>
            <ToolButton label="Undo" disabled><Undo /></ToolButton>
            <ToolButton label="Delete"><Cross /></ToolButton>
            <ToolButton label="Refresh"><Refresh /></ToolButton>
            <ToolButton label="Mail"><Mail /></ToolButton>
            <ToolButton label="Save all">
                <At x={1} y={1} s={0.6}><Floppy /></At>
                <At x={12} y={12} s={0.6}><Floppy /></At>
            </ToolButton>
            <button type="button" className="flex h-[29px] w-[110px] rounded-[5px] bg-white/60 p-0.5 text-[10px] leading-[11px] text-black">
                <span className="flex h-full w-full flex-col justify-center rounded-[5px] border border-[#8d8ba8] bg-white/30 pt-0.5">
                    Attachment
                    <i className="text-[8px] leading-[11px]">(drop files here)</i>
                </span>
            </button>
        </div>
    </div>
)

const Detail = () => (
    <div className="flex min-h-0 flex-1 border-r border-[#888] bg-[#fafafa]">
        <div className="min-w-0 flex-1 overflow-hidden">
            <div className="grid grid-cols-2 gap-1 pr-2.5 pl-1.5">
                <div>
                    <FieldRow id="fix" label="fix planning" />
                    <FieldRow id="done" label="done" date />
                    <FieldRow id="closed" label="closed" date>
                        <span className="w-[13px]" />
                        <Tick id="cancelled" />
                        <label htmlFor="cancelled" className="ml-0.5">cancelled</label>
                    </FieldRow>
                    <RichText label="description" />
                    <RichText label="objectives" />
                    <div className="mt-1.5">
                        <Section title="Predecessor element" count={0} />
                        <LinkTable
                            className="mt-[5px] mb-1"
                            columns={[{ label: '', width: 'w-[52px]' }, { label: 'element', width: 'w-[105px]' }, { label: 'name' }, { label: 'status', width: 'w-[79px]' }]}
                        />
                        <Section title="Linked Elements" count={0} />
                        <LinkTable
                            className="mt-[5px]"
                            columns={[{ label: '', width: 'w-[26px]' }, { label: 'element', width: 'w-[79px]' }, { label: 'name' }, { label: 'status', width: 'w-[79px]' }]}
                        />
                    </div>
                </div>
                <div>
                    <div className="flex h-[5px] divide-x divide-[#aaa] border-x border-b border-[#aaa] bg-[#e8e8e8]">
                        <span className="w-[52px]" />
                        <span className="w-[27px]" />
                        <span className="w-[131px]" />
                        <span className="flex-1" />
                        <span className="w-[79px]" />
                        <span className="w-[79px]" />
                        <span className="w-[52px]" />
                    </div>
                    <div className="-mr-[7px] ml-[7px] pt-[5px]">
                        <Section title="Versions linked to this project" count={0} />
                        <LinkTable
                            className="mt-[5px] mb-1"
                            columns={[{ label: '', width: 'w-[52px]' }, { label: 'version' }, { label: 'start date', width: 'w-[79px]' }, { label: 'end date', width: 'w-[79px]' }, { label: 'closed', width: 'w-[52px]' }]}
                        />
                    </div>
                    <Section title="Sub projects" />
                    <p className="h-[90px] pt-[11px] pl-[60px] text-[11px] text-[#544f8c]">Sub projects :</p>
                    <Section title="Successor element" count={0} />
                    <LinkTable
                        className="mt-[5px] mb-1"
                        columns={[{ label: '', width: 'w-[52px]' }, { label: 'element', width: 'w-[105px]' }, { label: 'name' }, { label: 'status', width: 'w-[79px]' }]}
                    />
                    <Section title="Attachments" count={0} />
                    <LinkTable
                        link
                        className="mt-[5px] mb-[7px]"
                        columns={[{ label: '', width: 'w-[52px]' }, { label: 'id', width: 'w-[27px]' }, { label: 'file' }]}
                    />
                    <div className="-mr-[7px] ml-[7px]">
                        <Section title="Notes" count={0} />
                        <div className="mt-[5px] pr-1">
                            <LinkTable columns={[{ label: '', width: 'w-[52px]' }, { label: 'id', width: 'w-[26px]' }, { label: 'note' }]} />
                        </div>
                    </div>
                </div>
            </div>
            <div className="mt-[21px] mr-3 ml-0.5">
                <Section title="Change history" />
            </div>
        </div>
        <div className="flex w-4 shrink-0 flex-col items-center bg-[#f0f0f0] py-[3px] text-[#505050]">
            <ChevronUp size={13} strokeWidth={3} />
            <span className="mt-[118px] h-[93px] w-full bg-[#cdcdcd]" />
            <ChevronDown size={13} strokeWidth={3} className="mt-auto" />
        </div>
    </div>
)

const StatusButton = ({ label, width, icon }: { label: string; width: string; icon: ReactNode }) => (
    <button
        type="button"
        className={clsx('flex h-7 shrink-0 items-center rounded-[5px] border border-white bg-white/50 pl-0.5 whitespace-nowrap text-black', width)}
    >
        <Icon size={22}>{icon}</Icon>
        {label}
    </button>
)

const StatusBar = () => (
    <footer className={clsx('flex h-[34px] shrink-0 border-b-2 border-[#c58d86] pt-0.5 pl-px text-[11px]', BAR)}>
        <div className="flex gap-1">
            <StatusButton label="Disconnection" width="w-[117px] gap-1" icon={<Plug />} />
            <StatusButton label="ANV" width="w-[102px] gap-1.5" icon={<UserTool />} />
            <StatusButton label="Hide menu" width="w-[152px] gap-4" icon={<HideMode />} />
            <StatusButton label="Use switched mode" width="w-[152px] gap-4" icon={<SwitchMode />} />
        </div>
        <strong className={clsx('flex-1 pt-1.5 text-center text-[12px] text-white', TEXT_SHADOW)}>Du An</strong>
        <div className="flex w-[166px] justify-end pr-0.5">
            <button type="button" className="flex h-7 w-[101px] items-center justify-between rounded-[5px] border border-white bg-white/50 pt-0.5 pl-[5px] leading-[13px] text-black">
                <span>
                    ProjeQtOr
                    <br />
                    V5.0.1
                </span>
                <QLogo size={28} />
            </button>
        </div>
    </footer>
)

export default function App() {
    return (
        <div className="flex h-screen flex-col overflow-hidden bg-white [font-family:'DejaVu_Sans',sans-serif]">
            <BrowserBar />
            <main className="flex min-h-0 flex-1">
                <SideMenu />
                <div className="flex min-w-0 flex-1 flex-col">
                    <Toolbar />
                    <div className="flex min-h-0 flex-1">
                        <div className="flex w-1.5 shrink-0 items-center justify-center border-r border-l border-[#999] bg-[#dcdcdc]">
                            <Grip vertical />
                        </div>
                        <div className="flex min-w-0 flex-1 flex-col">
                            <ProjectList />
                            <div className="flex h-[5px] shrink-0 items-center justify-center border-y border-[#999] bg-[#dcdcdc]">
                                <Grip />
                            </div>
                            <DetailBar />
                            <Detail />
                        </div>
                    </div>
                </div>
            </main>
            <StatusBar />
        </div>
    )
}
